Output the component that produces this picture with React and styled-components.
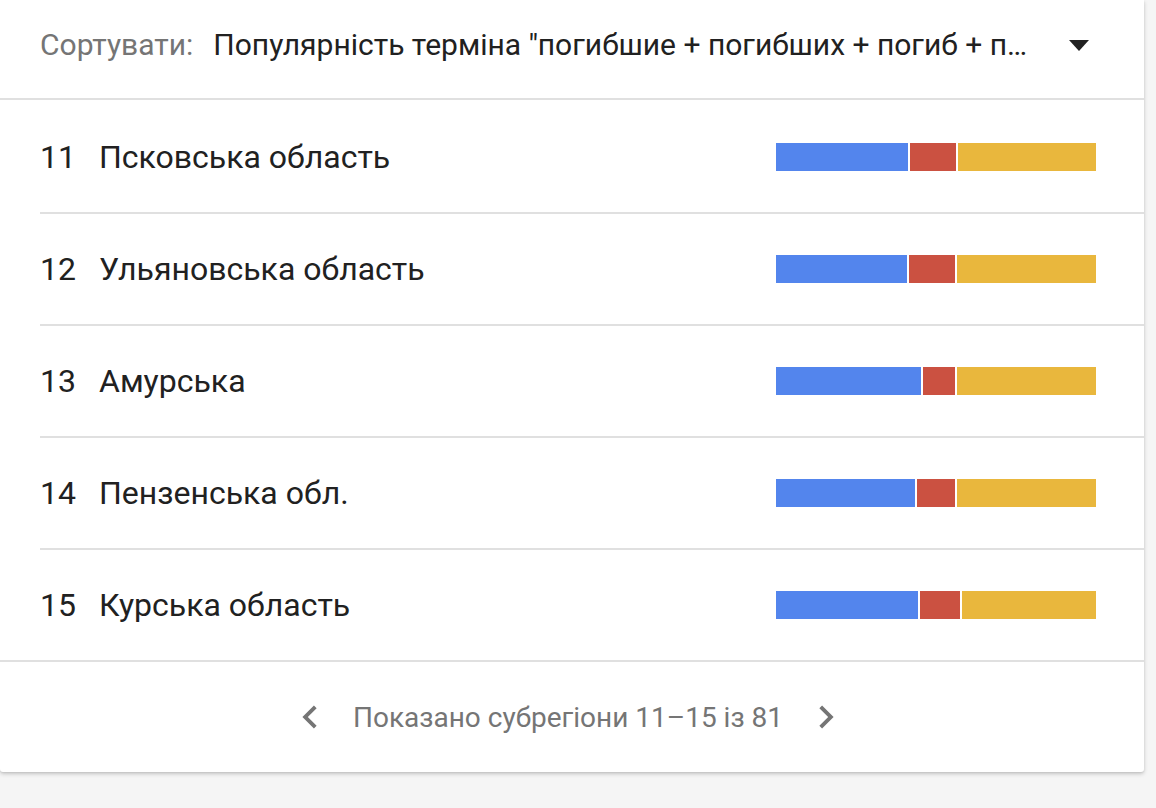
import React from 'react';
import styled, { createGlobalStyle } from 'styled-components';

const GlobalStyle = createGlobalStyle`
  html, body {
    margin: 0;
    padding: 0;
    background: #f5f5f5;
    font-family: Roboto, "Noto Sans", "Liberation Sans", sans-serif;
  }
`;

const Page = styled.div`
  width: 1156px;
  height: 808px;
  overflow: hidden;
  background: #f5f5f5;
`;

const Card = styled.div`
  width: 1144px;
  background: #fff;
  border-radius: 0 0 3px 3px;
  box-shadow: 0 2px 4px rgba(0, 0, 0, 0.18), 0 1px 2px rgba(0, 0, 0, 0.08);
`;

const Header = styled.div`
  display: flex;
  align-items: center;
  height: 88px;
  padding: 0 55px 10px 40px;
  border-bottom: 2px solid #e0e0e0;
  font-size: 30px;
`;

const SortLabel = styled.span`
  color: #757575;
  margin-right: 20px;
  white-space: nowrap;
`;

const SortValue = styled.span`
  flex: 1;
  color: #212121;
  white-space: nowrap;
  overflow: hidden;
  text-overflow: ellipsis;
  margin-right: 28px;
`;

const Caret = styled.span`
  width: 0;
  height: 0;
  margin-top: 2px;
  border-left: 10px solid transparent;
  border-right: 10px solid transparent;
  border-top: 11px solid #212121;
`;

const List = styled.div`
  padding: 1px 0 0 40px;
`;

const Row = styled.div`
  display: flex;
  align-items: center;
  height: 111px;
  padding-right: 48px;
  border-bottom: ${p => (p.$last ? 'none' : '2px solid #e0e0e0')};
  font-size: 32px;
  color: #212121;

  & + & {
    height: 110px;
  }
`;

const Rank = styled.span`
  width: 59px;
  flex: none;
`;

const Name = styled.span`
  flex: 1;
`;

const Bar = styled.div`
  display: flex;
  gap: 2px;
  width: 320px;
  height: 28px;
`;

const Segment = styled.div`
  height: 100%;
  background: ${p => p.$color};
`;

const Footer = styled.div`
  display: flex;
  align-items: center;
  justify-content: center;
  height: 110px;
  padding-right: 8px;
  border-top: 2px solid #e0e0e0;
  color: #757575;
  font-size: 28px;
`;

const Pager = styled.span`
  margin: 0 36px;
`;

const Chevron = ({ dir }) => (
  <svg width="15" height="24" viewBox="7.8 5.8 7.8 12.4">
    <path
      d={
        dir === 'left'
          ? 'M15.41 7.41L14 6l-6 6 6 6 1.41-1.41L10.83 12z'
          : 'M10 6L8.59 7.41 13.17 12l-4.58 4.59L10 18l6-6z'
      }
      fill="#757575"
      transform={dir === 'left' ? undefined : 'translate(-0.6 0)'}
    />
  </svg>
);

const colors = ['#5385ed', '#cb5141', '#e9b73d'];

const rows = [
  { n: 11, name: 'Псковська область', w: [132, 46, 138] },
  { n: 12, name: 'Ульяновська область', w: [131, 46, 139] },
  { n: 13, name: 'Амурська', w: [145, 32, 139] },
  { n: 14, name: 'Пензенська обл.', w: [139, 38, 139] },
  { n: 15, name: 'Курська область', w: [142, 40, 134] },
];

export default function App() {
  return (
    <Page>
      <GlobalStyle />
      <Card>
        <Header>
          <SortLabel>Сортувати:</SortLabel>
          <SortValue>
            Популярність терміна "погибшие + погибших + погиб + погибли"
          </SortValue>
          <Caret />
        </Header>
        <List>
          {rows.map((r, i) => (
            <Row key={r.n} $last={i === rows.length - 1}>
              <Rank>{r.n}</Rank>
              <Name>{r.name}</Name>
              <Bar>
                {r.w.map((w, j) => (
                  <Segment key={j} $color={colors[j]} style={{ width: w }} />
                ))}
              </Bar>
            </Row>
          ))}
        </List>
        <Footer>
          <Chevron dir="left" />
          <Pager>Показано субрегіони 11–15 із 81</Pager>
          <Chevron dir="right" />
        </Footer>
      </Card>
    </Page>
  );
}
